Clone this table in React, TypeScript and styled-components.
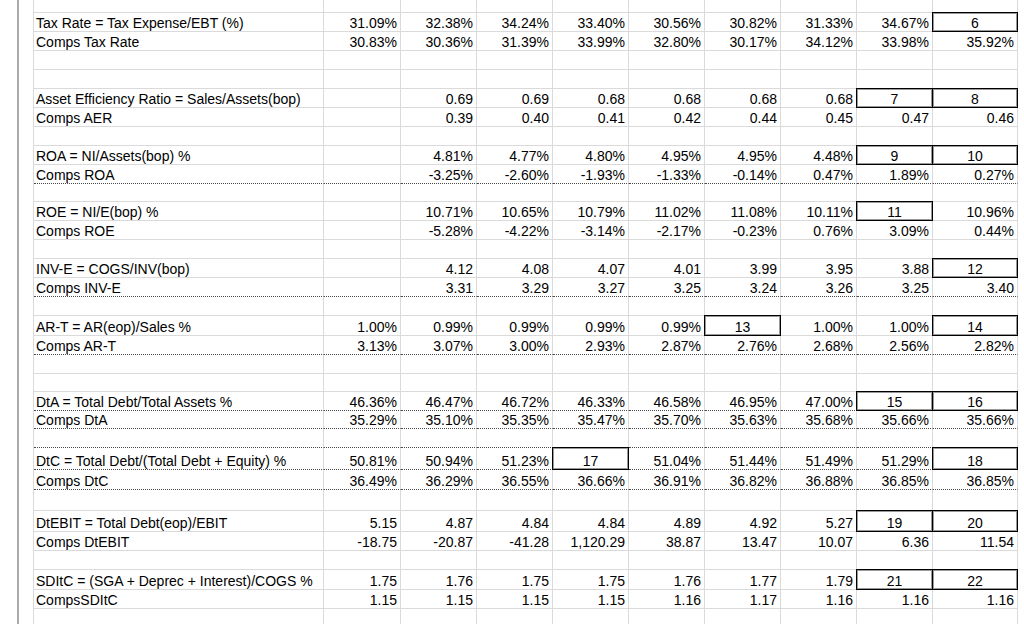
import React from "react";
import styled, { createGlobalStyle } from "styled-components";

const GlobalStyle = createGlobalStyle`
  html, body { margin: 0; padding: 0; background: #fff; }
  body { font-family: "Liberation Sans", Arial, sans-serif; }
  #root { width: 1024px; height: 624px; overflow: hidden; }
`;

const Sheet = styled.div`
  display: flex;
  width: 1024px;
  height: 624px;
  overflow: hidden;
  background: #fff;
`;

const Gutter = styled.div`
  width: 17px;
  flex: none;
`;

const Splitter = styled.div`
  width: 2px;
  flex: none;
  background: #ababab;
`;

const HeaderStrip = styled.div`
  width: 14px;
  flex: none;
  border-right: 1px solid #dadada;
`;

const Grid = styled.div`
  display: flex;
  flex-direction: column;
  flex: none;
`;

const Row = styled.div<{ $h: number }>`
  display: grid;
  grid-template-columns: 290px 77px repeat(7, 76px) 85px;
  height: ${(p) => p.$h}px;
  flex: none;
`;

const Cell = styled.div<{ $dotted?: boolean }>`
  box-sizing: border-box;
  display: flex;
  align-items: flex-end;
  min-width: 0;
  border-right: 1px solid #dadada;
  border-bottom: 1px ${(p) => (p.$dotted ? "dotted #4a4a4a" : "solid #dadada")};
  font-size: 14px;
  line-height: 15px;
  color: #000;
  white-space: nowrap;
`;

const LabelCell = styled(Cell)`
  justify-content: flex-start;
  padding-left: 2px;
`;

const NumCell = styled(Cell)`
  justify-content: flex-end;
  padding-right: 3px;
`;

const BoxCell = styled(Cell)`
  position: relative;
  justify-content: center;
  &::after {
    content: "";
    position: absolute;
    inset: -1px;
    border: 1px solid #000;
    box-shadow: inset 0 0 0 1px rgba(0, 0, 0, 0.4);
    pointer-events: none;
  }
`;

type Val = string | { box: string };
type RowData = { h: number; label?: string; v?: Val[]; dotted?: boolean };

const b = (s: string) => ({ box: s });

const rows: RowData[] = [
  { h: 13 },
  { h: 19, label: "Tax Rate = Tax Expense/EBT (%)", v: ["31.09%", "32.38%", "34.24%", "33.40%", "30.56%", "30.82%", "31.33%", "34.67%", b("6")] },
  { h: 19, label: "Comps Tax Rate", v: ["30.83%", "30.36%", "31.39%", "33.99%", "32.80%", "30.17%", "34.12%", "33.98%", "35.92%"] },
  { h: 19 },
  { h: 19 },
  { h: 19, label: "Asset Efficiency Ratio = Sales/Assets(bop)", v: ["", "0.69", "0.69", "0.68", "0.68", "0.68", "0.68", b("7"), b("8")] },
  { h: 19, label: "Comps AER", v: ["", "0.39", "0.40", "0.41", "0.42", "0.44", "0.45", "0.47", "0.46"] },
  { h: 19 },
  { h: 19, label: "ROA = NI/Assets(bop) %", v: ["", "4.81%", "4.77%", "4.80%", "4.95%", "4.95%", "4.48%", b("9"), b("10")] },
  { h: 19, label: "Comps ROA", dotted: true, v: ["", "-3.25%", "-2.60%", "-1.93%", "-1.33%", "-0.14%", "0.47%", "1.89%", "0.27%"] },
  { h: 18 },
  { h: 19, label: "ROE = NI/E(bop) %", v: ["", "10.71%", "10.65%", "10.79%", "11.02%", "11.08%", "10.11%", b("11"), "10.96%"] },
  { h: 19, label: "Comps ROE", v: ["", "-5.28%", "-4.22%", "-3.14%", "-2.17%", "-0.23%", "0.76%", "3.09%", "0.44%"] },
  { h: 19 },
  { h: 19, label: "INV-E = COGS/INV(bop)", v: ["", "4.12", "4.08", "4.07", "4.01", "3.99", "3.95", "3.88", b("12")] },
  { h: 19, label: "Comps INV-E", dotted: true, v: ["", "3.31", "3.29", "3.27", "3.25", "3.24", "3.26", "3.25", "3.40"] },
  { h: 19 },
  { h: 20, label: "AR-T = AR(eop)/Sales %", v: ["1.00%", "0.99%", "0.99%", "0.99%", "0.99%", b("13"), "1.00%", "1.00%", b("14")] },
  { h: 19, label: "Comps AR-T", dotted: true, v: ["3.13%", "3.07%", "3.00%", "2.93%", "2.87%", "2.76%", "2.68%", "2.56%", "2.82%"] },
  { h: 19 },
  { h: 18 },
  { h: 19, label: "DtA = Total Debt/Total Assets %", dotted: true, v: ["46.36%", "46.47%", "46.72%", "46.33%", "46.58%", "46.95%", "47.00%", b("15"), b("16")] },
  { h: 18, label: "Comps DtA", dotted: true, v: ["35.29%", "35.10%", "35.35%", "35.47%", "35.70%", "35.63%", "35.68%", "35.66%", "35.66%"] },
  { h: 19, dotted: true },
  { h: 22, label: "DtC = Total Debt/(Total Debt + Equity) %", dotted: true, v: ["50.81%", "50.94%", "51.23%", b("17"), "51.04%", "51.44%", "51.49%", "51.29%", b("18")] },
  { h: 20, label: "Comps DtC", dotted: true, v: ["36.49%", "36.29%", "36.55%", "36.66%", "36.91%", "36.82%", "36.88%", "36.85%", "36.85%"] },
  { h: 21 },
  { h: 21, label: "DtEBIT = Total Debt(eop)/EBIT", v: ["5.15", "4.87", "4.84", "4.84", "4.89", "4.92", "5.27", b("19"), b("20")] },
  { h: 19, label: "Comps DtEBIT", v: ["-18.75", "-20.87", "-41.28", "1,120.29", "38.87", "13.47", "10.07", "6.36", "11.54"] },
  { h: 19 },
  { h: 20, label: "SDItC = (SGA + Deprec + Interest)/COGS %", v: ["1.75", "1.76", "1.75", "1.75", "1.76", "1.77", "1.79", b("21"), b("22")] },
  { h: 19, label: "CompsSDItC", v: ["1.15", "1.15", "1.15", "1.15", "1.16", "1.17", "1.16", "1.16", "1.16"] },
  { h: 20 },
];

const EMPTY: Val[] = ["", "", "", "", "", "", "", "", ""];

export default function App() {
  return (
    <>
      <GlobalStyle />
      <Sheet>
        <Gutter />
        <Splitter />
        <HeaderStrip />
        <Grid>
          {rows.map((r, i) => (
            <Row key={i} $h={r.h}>
              <LabelCell $dotted={r.dotted}>{r.label ?? ""}</LabelCell>
              {(r.v ?? EMPTY).map((v, j) =>
                typeof v === "string" ? (
                  <NumCell key={j} $dotted={r.dotted}>{v}</NumCell>
                ) : (
                  <BoxCell key={j} $dotted={r.dotted}>{v.box}</BoxCell>
                )
              )}
            </Row>
          ))}
        </Grid>
      </Sheet>
    </>
  );
}
